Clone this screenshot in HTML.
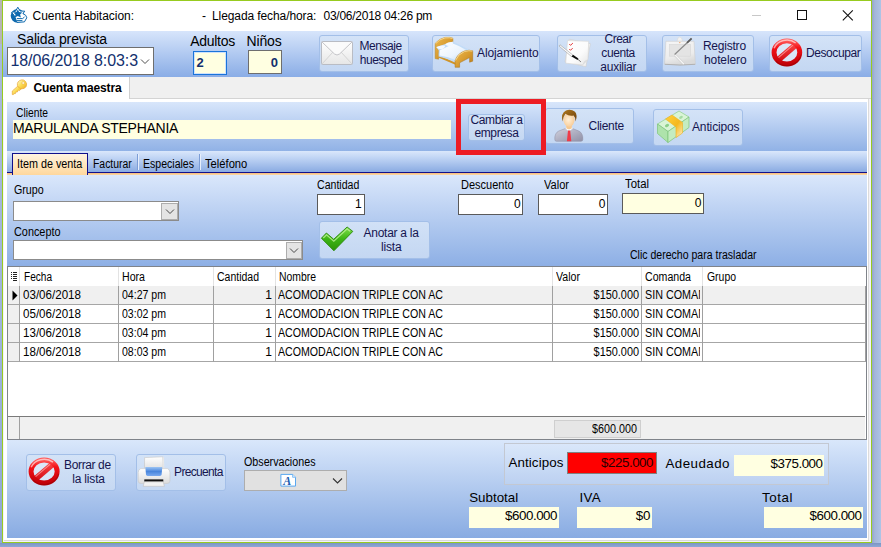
<!DOCTYPE html>
<html lang="es"><head><meta charset="utf-8"><title>Cuenta Habitacion</title><style>
html,body{margin:0;padding:0}
body{width:881px;height:547px;overflow:hidden;position:relative;background:#9db3dc;font-family:"Liberation Sans",sans-serif}
body div,body svg,.t{position:absolute}
.t{white-space:pre;display:block}
.btn{background:linear-gradient(rgba(212,227,247,0.92),rgba(200,218,243,0.92));border:1px solid #a3bfe8;border-radius:3px;box-sizing:border-box}
</style></head>
<body>
<svg width="0" height="0" style="left:0;top:0"><defs>
<linearGradient id="gRed" x1="0" y1="0" x2="0" y2="1"><stop offset="0" stop-color="#ff5a5a"/><stop offset="0.3" stop-color="#f41218"/><stop offset="1" stop-color="#c20008"/></linearGradient>
<linearGradient id="gRedHi" x1="0" y1="0" x2="0" y2="1"><stop offset="0" stop-color="#ffffff" stop-opacity="0.75"/><stop offset="1" stop-color="#ffffff" stop-opacity="0"/></linearGradient>
<linearGradient id="gWood" x1="0" y1="0" x2="1" y2="1"><stop offset="0" stop-color="#ecb850"/><stop offset="0.5" stop-color="#d89c30"/><stop offset="1" stop-color="#b87a18"/></linearGradient>
<linearGradient id="gSheet" x1="0" y1="0" x2="1" y2="1"><stop offset="0" stop-color="#ffffff"/><stop offset="0.6" stop-color="#eaf3fd"/><stop offset="1" stop-color="#b9d6f4"/></linearGradient>
<linearGradient id="gGreen" x1="0" y1="0" x2="0" y2="1"><stop offset="0" stop-color="#7fe04a"/><stop offset="0.5" stop-color="#3db515"/><stop offset="1" stop-color="#2b9208"/></linearGradient>
<linearGradient id="gGold" x1="0" y1="0" x2="1" y2="1"><stop offset="0" stop-color="#ffd23c"/><stop offset="0.55" stop-color="#f5b81e"/><stop offset="1" stop-color="#fff0c8"/></linearGradient>
<linearGradient id="gSuit" x1="0" y1="0" x2="1" y2="1"><stop offset="0" stop-color="#d2d2de"/><stop offset="0.5" stop-color="#b0b0c2"/><stop offset="1" stop-color="#9090a6"/></linearGradient>
<linearGradient id="gHair" x1="0" y1="0" x2="1" y2="1"><stop offset="0" stop-color="#b07a20"/><stop offset="1" stop-color="#6a3c08"/></linearGradient>
<radialGradient id="gFace" cx="0.45" cy="0.5" r="0.6"><stop offset="0" stop-color="#fff0d8"/><stop offset="1" stop-color="#f8c890"/></radialGradient>
<linearGradient id="gPrn" x1="0" y1="0" x2="0" y2="1"><stop offset="0" stop-color="#ffffff"/><stop offset="1" stop-color="#dcdcdc"/></linearGradient>
<linearGradient id="gPrnBlue" x1="0" y1="0" x2="0" y2="1"><stop offset="0" stop-color="#9cc4f4"/><stop offset="0.5" stop-color="#4a86dc"/><stop offset="1" stop-color="#7aaaf0"/></linearGradient>
<linearGradient id="gEnv" x1="0" y1="0" x2="0" y2="1"><stop offset="0" stop-color="#ffffff"/><stop offset="1" stop-color="#e6e6e6"/></linearGradient>
<linearGradient id="gTab" x1="0" y1="0" x2="0.3" y2="1"><stop offset="0" stop-color="#f6f6f6"/><stop offset="0.7" stop-color="#ececec"/><stop offset="1" stop-color="#dadada"/></linearGradient>
<linearGradient id="gKey" x1="0" y1="0" x2="1" y2="1"><stop offset="0" stop-color="#fffad8"/><stop offset="0.5" stop-color="#fbdc50"/><stop offset="1" stop-color="#f0a828"/></linearGradient>
<linearGradient id="gPaper" x1="0" y1="0" x2="1" y2="1"><stop offset="0" stop-color="#ffffff"/><stop offset="0.6" stop-color="#fbfbfb"/><stop offset="1" stop-color="#e4e4e4"/></linearGradient><linearGradient id="gRedB" gradientUnits="userSpaceOnUse" x1="0" y1="-10" x2="0" y2="10"><stop offset="0" stop-color="#ff4a4a"/><stop offset="1" stop-color="#d00810"/></linearGradient></defs></svg>
<div style="left:0px;top:0px;width:2px;height:44px;background:#b7b5b4;"></div>
<div style="left:0px;top:44px;width:2px;height:503px;background:linear-gradient(#a9b9d9,#9db3dc 60%,#8fa8d4);"></div>
<div style="left:872px;top:0px;width:9px;height:547px;background:linear-gradient(90deg,#95a5c9,#a3b6d8 30%,#aec4e6);"></div>
<div style="left:0px;top:543px;width:881px;height:4px;background:linear-gradient(#7d95c4,#8ea8d6);"></div>
<div class="win" style="left:2px;top:0px;width:870px;height:543px;background:#fff;border:1px solid #97cb1f;box-sizing:border-box;"></div>
<div style="left:3px;top:77px;width:868px;height:465px;background:#f3f2f8;"></div>
<div style="left:4px;top:99px;width:865px;height:442px;background:#fff;border-right:1px solid #dcdcdc;border-bottom:1px solid #dadada;box-sizing:border-box;"></div>
<svg style="left:10px;top:6px" width="19" height="19" viewBox="10 6 19 19"><circle cx="17.6" cy="15.8" r="6.9" fill="#0f6aae"/><path d="M17.8 7.2 L20.1 11 L24.8 11.2 L22.9 13.6 L25.7 15.3 L26.8 17.8 L24.4 21.9 L17 22.4 L15.9 19.6 L14.2 15.5 L11.6 12.4 L15.5 11.3 Z" fill="#fff" stroke="#0f6aae" stroke-width="1"/><path d="M17.8 9.4 L19.1 12.1 L22.3 12.4 L20.1 14.5 L20.9 17.5 L17.8 15.9 L14.8 17.6 L15.5 14.5 L13.4 12.5 L16.5 12.1 Z" fill="#0f6aae"/><path d="M15.2 16 L15.2 22 L11.8 19 Z" fill="#0f6aae"/><path d="M16.8 18.6 H22.6 L24.5 17 M16.8 20.6 H22.4" stroke="#0f6aae" stroke-width="1" fill="none"/></svg>
<span class="t" style="left:32.50px;top:9px;font-size:12px;line-height:14px;letter-spacing:-0.032px;">Cuenta Habitacion:</span>
<span class="t" style="left:202.00px;top:9px;font-size:12px;line-height:14px;">-</span>
<span class="t" style="left:212.00px;top:9px;font-size:12px;line-height:14px;letter-spacing:-0.094px;">Llegada fecha/hora:</span>
<span class="t" style="left:323.50px;top:9px;font-size:12px;line-height:14px;letter-spacing:-0.255px;">03/06/2018 04:26 pm</span>
<svg style="left:745px;top:5px" width="120" height="22" viewBox="745 5 120 22"><path d="M752 15.5 H761" stroke="#c8c8c8" stroke-width="1"/><rect x="797.5" y="10.5" width="9" height="9" fill="none" stroke="#111" stroke-width="1"/><path d="M842.8 10.3 L852.8 20.3 M852.8 10.3 L842.8 20.3" stroke="#111" stroke-width="1.1"/></svg>
<div style="left:3px;top:31px;width:868px;height:46px;background:linear-gradient(#d7e5fb,#8aade6);"></div>
<span class="t" style="left:17.00px;top:31px;font-size:14px;line-height:16px;letter-spacing:-0.122px;">Salida prevista</span>
<div style="left:7px;top:47px;width:147px;height:28px;background:#fff;border:1px solid #6e6e6e;box-sizing:border-box;"></div>
<span class="t" style="left:10.50px;top:52px;font-size:16px;line-height:17px;letter-spacing:-0.089px;color:#12306e;">18/06/2018 8:03:3</span>
<svg style="left:140px;top:58px" width="10" height="7" viewBox="0 0 10 7"><path d="M1 1.5 L5 5.5 L9 1.5" fill="none" stroke="#505050" stroke-width="1"/></svg>
<span class="t" style="left:190.20px;top:33px;font-size:14px;line-height:16px;letter-spacing:-0.272px;">Adultos</span>
<div style="left:193px;top:51px;width:34px;height:24px;background:#ffffe1;border:1px solid #1a74da;box-shadow:inset 0 0 0 1px #cfe2fa;box-sizing:border-box;"></div>
<span class="t" style="left:196.50px;top:55px;font-size:13px;line-height:15px;font-weight:700;color:#12306e;">2</span>
<span class="t" style="left:246.50px;top:33px;font-size:14px;line-height:16px;letter-spacing:-0.159px;">Niños</span>
<div style="left:248px;top:50px;width:34px;height:24px;background:#ffffe1;border:1px solid #6e6e6e;box-sizing:border-box;"></div>
<span class="t" style="left:270.67px;top:55px;font-size:13px;line-height:15px;font-weight:700;color:#12306e;">0</span>
<div class="btn" style="left:319px;top:35px;width:90px;height:36.5px;"></div>
<svg style="left:320px;top:40px" width="35" height="27" viewBox="320 40 35 27"><rect x="321.5" y="41.5" width="31" height="23" rx="1" fill="url(#gEnv)" stroke="#b9bcc4" stroke-width="1"/><path d="M322 64 L333 52 M352 64 L341 52" stroke="#d4d4d4" stroke-width="1" fill="none"/><path d="M322 42 L334.5 54 Q337 56 339.5 54 L352 42" fill="#fbfbfb" stroke="#c4c4c8" stroke-width="1"/></svg>
<span class="t" style="left:359.39px;top:39px;font-size:12px;line-height:14px;letter-spacing:-0.423px;color:#15154f;">Mensaje</span>
<span class="t" style="left:359.84px;top:53px;font-size:12px;line-height:14px;letter-spacing:-0.521px;color:#15154f;">huesped</span>
<div class="btn" style="left:432px;top:35px;width:108px;height:36.5px;"></div>
<svg style="left:433px;top:35px" width="43" height="35" viewBox="433 35 43 35"><path d="M435.2 58.6 L435.2 43.4 Q439 38.6 445 37.4 Q450 36.8 452.9 38.2 L452.9 45 L438.6 52 L438.6 59.2 Z" fill="url(#gWood)" stroke="#b8801c" stroke-width="0.5"/><path d="M435.6 43.6 Q439.4 39 445 37.9 Q450 37.3 452.6 38.5" fill="none" stroke="#f8dc98" stroke-width="0.9"/><path d="M438.4 55 L456 63 L456 65 L438.4 57.6 Z" fill="#d09428"/><path d="M436.3 47 L452.9 41.4 L471 50.4 L457 61.8 L438.6 56.4 L438.8 50.6 Z" fill="#c2dcf7"/><path d="M440 50.3 L453.4 43.8 Q460 46 466.5 50.3 Q460 53 456.6 60.4 Q448 56.8 439.6 55.6 Z" fill="url(#gSheet)"/><path d="M436.4 47.2 Q440 44.8 444.8 45.6 Q445.8 47.4 442 49.2 Q438.6 49.8 436.4 47.2Z" fill="#f4f9ff"/><path d="M445 44.2 Q448.6 41.6 452.8 42.2 Q454 44 450.4 45.8 Q447 46.4 445 44.2Z" fill="#f4f9ff"/><path d="M455.1 67.3 L455.1 60.4 Q457.6 53.6 464.4 51 Q469.6 49.6 472.7 50.8 L472.7 61.2 L469.6 62.2 L469.6 57.6 L459.6 62.8 L459.6 67.3 Z" fill="url(#gWood)" stroke="#a87014" stroke-width="0.5"/><path d="M455.5 60.4 Q458 54 464.4 51.5 Q469.4 50.1 472.4 51.1" fill="none" stroke="#f8dc98" stroke-width="0.9"/></svg>
<span class="t" style="left:477.00px;top:46px;font-size:12px;line-height:14px;letter-spacing:-0.100px;color:#15154f;">Alojamiento</span>
<div class="btn" style="left:557px;top:35px;width:90px;height:36.5px;"></div>
<svg style="left:557px;top:36px" width="36" height="33" viewBox="557 36 36 33"><path d="M569.2 39.2 L590.4 43.7 L585.9 66.7 L565 61.8 Z" fill="#f1f1f1" stroke="#cdcdcd" stroke-width="0.6"/><path d="M567.5 40.6 L588.7 41.3 L588 59.5 L582.5 64.9 L565.7 63.2 Z" fill="url(#gPaper)" stroke="#d2d2d2" stroke-width="0.6"/><path d="M588 59.5 Q584 60 582.5 64.9 Z" fill="#dcdcdc"/><path d="M569.3 44 l1.2 1.3 l2.4-2.2 M569.3 49 l1.2 1.3 l2.2-2.2" stroke="#e23a3a" stroke-width="1" fill="none"/><path d="M559 46 L560 44.8 L573 55.2 L571.8 56.8 Z" fill="#fbfbfb" stroke="#9c9c9c" stroke-width="0.6"/><path d="M571.6 56.4 L573 54.8 L578.4 58.6 L577.6 60 Z" fill="#0c0c0c"/><path d="M577.8 59.2 L580.9 61.9" stroke="#555" stroke-width="0.8"/></svg>
<span class="t" style="left:604.54px;top:32px;font-size:12px;line-height:14px;letter-spacing:-0.523px;color:#15154f;">Crear</span>
<span class="t" style="left:601.34px;top:46px;font-size:12px;line-height:14px;letter-spacing:-0.422px;color:#15154f;">cuenta</span>
<span class="t" style="left:600.36px;top:60px;font-size:12px;line-height:14px;letter-spacing:-0.277px;color:#15154f;">auxiliar</span>
<div class="btn" style="left:662px;top:35px;width:92px;height:36.5px;"></div>
<svg style="left:662px;top:35px" width="36" height="33" viewBox="662 35 36 33"><path d="M677 41.3 Q677.6 37 679.8 37 Q682 37 682.6 41.3Z" fill="#f2f2f2" stroke="#d4d4d4" stroke-width="0.5"/><path d="M665.9 41.3 L694 41.3 L695.4 64.2 Q680 65.6 664.5 64.2 Z" fill="url(#gTab)" stroke="#cccccc" stroke-width="0.6"/><path d="M664.8 64.3 Q680 65.8 695.2 64.3" fill="none" stroke="#adadad" stroke-width="0.9"/><rect x="669.4" y="44.4" width="21.2" height="11.8" fill="#e4e4e4" stroke="#d6d6d6" stroke-width="0.6"/><circle cx="679.8" cy="42.6" r="0.7" fill="#f4a060"/><path d="M674.8 54.8 L683.8 64" fill="none" stroke="#c9c9c9" stroke-width="2.4"/><path d="M674.8 54.8 L683.8 64" fill="none" stroke="#f6f6f6" stroke-width="1.4"/><path d="M691.4 38.7 L674.6 54.5" fill="none" stroke="#8c8c8c" stroke-width="1.2"/><path d="M691.6 38.4 L687 42.8" stroke="#5c5c5c" stroke-width="1.7"/></svg>
<span class="t" style="left:702.89px;top:39px;font-size:12px;line-height:14px;letter-spacing:-0.211px;color:#15154f;">Registro</span>
<span class="t" style="left:704.00px;top:53px;font-size:12px;line-height:14px;letter-spacing:-0.109px;color:#15154f;">hotelero</span>
<div class="btn" style="left:769px;top:35px;width:92.5px;height:36.5px;"></div>
<svg style="left:770px;top:37px" width="34" height="31" viewBox="770 37 34 31"><g transform="translate(786.9 52.4)"><ellipse cx="0" cy="0" rx="13.3" ry="12" fill="#e4ecf9" fill-opacity="0.55"/><path d="M-10.71 9.24 L10.71 -9.24" stroke="url(#gRedB)" stroke-width="6"/><path d="M-9.61317 6.18055 L7.52283 -8.60345" stroke="#ffb0b0" stroke-opacity="0.7" stroke-width="1.1"/><ellipse cx="0" cy="0" rx="12.85" ry="11.55" fill="none" stroke="url(#gRed)" stroke-width="4.9"/><path d="M-12.7798 -4.20685 A13.6 12.3 0 0 1 8.74191 -9.42235" fill="none" stroke="#ffffff" stroke-opacity="0.6" stroke-width="1.5"/><path d="M14.2797 2.29216 A14.5 13.2 0 0 1 -11.1076 8.4848" fill="none" stroke="#7a0000" stroke-opacity="0.35" stroke-width="1.2"/></g></svg>
<span class="t" style="left:806.00px;top:46px;font-size:12px;line-height:14px;letter-spacing:-0.415px;color:#15154f;">Desocupar</span>
<div style="left:3px;top:77px;width:868px;height:22px;background:#f0f0f0;border-bottom:1px solid #d4d4d4;box-sizing:border-box;"></div>
<div style="left:3px;top:77px;width:127px;height:22px;background:#fff;border-right:1px solid #d0d0d0;box-sizing:border-box;"></div>
<svg style="left:10px;top:78px" width="19" height="19" viewBox="10 78 19 19"><path d="M12.3 94.6 L12.3 91 L18.6 85.4 L21.8 88.4 L19.4 90.6 L18.2 90 L17.4 92 L16 91.8 L15.4 93.6 L13.8 93.6 L13.4 94.6 Z" fill="url(#gKey)" stroke="#e8a838" stroke-width="0.7"/><path d="M21.3 79.9 Q24 79.4 25.6 81.6 Q27.4 83.8 26.2 86.4 Q24.6 89.2 21.6 88.8 Q18.2 88.4 17.4 85.4 Q16.8 81.2 21.3 79.9Z" fill="url(#gKey)" stroke="#e8a838" stroke-width="0.7"/><circle cx="23.2" cy="83" r="1.3" fill="#fffbe6" stroke="#e8a838" stroke-width="0.5"/></svg>
<span class="t" style="left:33.50px;top:81px;font-size:12px;line-height:14px;letter-spacing:-0.146px;font-weight:700;">Cuenta maestra</span>
<div style="left:7px;top:102px;width:860px;height:49px;background:linear-gradient(#d8e6fb,#91b2e6);"></div>
<span class="t" style="left:15.50px;top:106px;font-size:12px;line-height:14px;transform:scaleX(0.8565);transform-origin:left center;">Cliente</span>
<div style="left:12.5px;top:120px;width:438.5px;height:19px;background:#ffffe1;"></div>
<span class="t" style="left:12.90px;top:120px;font-size:14px;line-height:16px;letter-spacing:-0.272px;">MARULANDA STEPHANIA</span>
<div class="btn" style="left:468px;top:114px;width:56.5px;height:26.5px;"></div>
<span class="t" style="left:470.42px;top:113px;font-size:12px;line-height:14px;letter-spacing:-0.362px;color:#15154f;">Cambiar a</span>
<span class="t" style="left:474.42px;top:126px;font-size:12px;line-height:14px;letter-spacing:-0.370px;color:#15154f;">empresa</span>
<div style="left:456px;top:99px;width:90px;height:56px;border:5px solid #ed1c24;box-sizing:border-box;z-index:5;"></div>
<div class="btn" style="left:545px;top:108px;width:88.5px;height:36px;"></div>
<svg style="left:552px;top:108px" width="34" height="36" viewBox="552 108 34 36"><path d="M554.8 139.5 Q554.5 133 558.8 131 L565.5 128.5 L572.5 128.5 L578.8 131 Q583.1 133 582.8 139.5 Q582.8 141.3 581 141.3 L556.6 141.3 Q554.8 141.3 554.8 139.5Z" fill="url(#gSuit)" stroke="#8c8ca2" stroke-width="0.5"/><path d="M565.4 128.6 L569 131.4 L572.8 128.6 L571.5 126.8 L566.6 126.8Z" fill="#fafafa"/><path d="M568 130.6 L570.2 130.6 L571.3 141.2 L566.9 141.2 Z" fill="#f03a48"/><path d="M566.3 124.5 H571.8 V128.3 Q569 130 566.3 128.3Z" fill="#f6c890"/><ellipse cx="569" cy="119.8" rx="5.6" ry="6.9" fill="url(#gFace)"/><path d="M562.6 121.5 Q560.5 113 566 110.4 Q571 108.6 575 111.8 Q577.8 115 575.6 121.6 Q575.6 117.5 573.6 115.6 Q569 116.6 565.4 113.8 Q563.2 116.5 562.6 121.5Z" fill="url(#gHair)"/></svg>
<span class="t" style="left:588.50px;top:119px;font-size:12px;line-height:14px;letter-spacing:-0.266px;color:#15154f;">Cliente</span>
<div class="btn" style="left:653px;top:109px;width:90px;height:36.5px;"></div>
<svg style="left:655px;top:109px" width="36" height="36" viewBox="655 109 36 36"><path d="M657.5 124 L679 111 L689 117 L668 131.5 Z" fill="#d9f4d6" stroke="#8ccf8a" stroke-width="0.7"/><path d="M657.5 124 L668 131.5 L668 142.5 L657.5 133.5 Z" fill="#aee3ab" stroke="#7cc47a" stroke-width="0.7"/><path d="M668 131.5 L689 117 L689 127.5 L668 142.5 Z" fill="#c4ecc1" stroke="#7cc47a" stroke-width="0.7"/><ellipse cx="667" cy="125.5" rx="2.2" ry="1.5" fill="#8ccf8a" transform="rotate(-30 667 125.5)"/><ellipse cx="681" cy="117.3" rx="2" ry="1.3" fill="#a5dba3" transform="rotate(-30 681 117.3)"/><path d="M665.5 119 L672 115 L682.5 122.5 L682.5 133 L676 137.6 L676 127 Z" fill="url(#gGold)" stroke="#f0b020" stroke-width="0.6"/></svg>
<span class="t" style="left:692.00px;top:120px;font-size:12px;line-height:14px;letter-spacing:-0.134px;color:#15154f;">Anticipos</span>
<div style="left:7px;top:151px;width:860px;height:21px;background:linear-gradient(#dae7fb,#c2d6f5 30%,#8aabe2);"></div>
<div style="left:7px;top:172px;width:860px;height:1px;background:#10108c;"></div>
<div style="left:7px;top:173px;width:860px;height:2px;background:linear-gradient(#f6bb78,#fbd9ac);"></div>
<div style="left:12px;top:153px;width:76px;height:22px;background:linear-gradient(#fff4e0,#ffe6be 50%,#ffd79c);border:1px solid #10108c;border-bottom:none;box-sizing:border-box;"></div>
<span class="t" style="left:17.30px;top:157px;font-size:12px;line-height:14px;transform:scaleX(0.8980);transform-origin:left center;">Item de venta</span>
<span class="t" style="left:93.30px;top:157px;font-size:12px;line-height:14px;transform:scaleX(0.8683);transform-origin:left center;">Facturar</span>
<div style="left:137px;top:154px;width:1px;height:16px;background:#7c9dd6;"></div>
<div style="left:138px;top:154px;width:1px;height:16px;background:#e6eefb;"></div>
<span class="t" style="left:143.30px;top:157px;font-size:12px;line-height:14px;transform:scaleX(0.8788);transform-origin:left center;">Especiales</span>
<div style="left:199px;top:154px;width:1px;height:16px;background:#7c9dd6;"></div>
<div style="left:200px;top:154px;width:1px;height:16px;background:#e6eefb;"></div>
<span class="t" style="left:205.00px;top:157px;font-size:12px;line-height:14px;transform:scaleX(0.9322);transform-origin:left center;">Teléfono</span>
<div style="left:7px;top:175px;width:860px;height:91px;background:linear-gradient(#dae7fb,#8dafe5);"></div>
<span class="t" style="left:14.00px;top:183px;font-size:12px;line-height:14px;transform:scaleX(0.8903);transform-origin:left center;">Grupo</span>
<div style="left:12.5px;top:201px;width:166.5px;height:20px;background:#fff;border:1px solid #8b8b8b;box-sizing:border-box;"></div>
<div style="left:161px;top:203px;width:16.5px;height:16.5px;background:#e4e4e4;border:1px solid #adadad;box-sizing:border-box;"></div>
<svg style="left:164.5px;top:208px" width="10" height="7" viewBox="0 0 10 7"><path d="M1 1.5 L5 5.5 L9 1.5" fill="none" stroke="#4a4a4a" stroke-width="1"/></svg>
<span class="t" style="left:14.00px;top:225px;font-size:12px;line-height:14px;transform:scaleX(0.9051);transform-origin:left center;">Concepto</span>
<div style="left:12.5px;top:240px;width:290.5px;height:20px;background:#fff;border:1px solid #8b8b8b;box-sizing:border-box;"></div>
<div style="left:285.5px;top:242px;width:16px;height:16.5px;background:#e4e4e4;border:1px solid #adadad;box-sizing:border-box;"></div>
<svg style="left:288.5px;top:247px" width="10" height="7" viewBox="0 0 10 7"><path d="M1 1.5 L5 5.5 L9 1.5" fill="none" stroke="#4a4a4a" stroke-width="1"/></svg>
<span class="t" style="left:317.20px;top:178px;font-size:12px;line-height:14px;transform:scaleX(0.8804);transform-origin:left center;">Cantidad</span>
<div style="left:317px;top:194px;width:48px;height:20.5px;background:#fff;border:1px solid #5a5a5a;box-sizing:border-box;"></div>
<span class="t" style="left:355.01px;top:197px;font-size:12px;line-height:14px;">1</span>
<span class="t" style="left:461.20px;top:178px;font-size:12px;line-height:14px;transform:scaleX(0.9168);transform-origin:left center;">Descuento</span>
<div style="left:458px;top:194px;width:65px;height:20.5px;background:#fff;border:1px solid #5a5a5a;box-sizing:border-box;"></div>
<span class="t" style="left:513.91px;top:197px;font-size:12px;line-height:14px;">0</span>
<span class="t" style="left:544.00px;top:178px;font-size:12px;line-height:14px;transform:scaleX(0.9217);transform-origin:left center;">Valor</span>
<div style="left:538px;top:194px;width:69.5px;height:20.5px;background:#fff;border:1px solid #5a5a5a;box-sizing:border-box;"></div>
<span class="t" style="left:598.81px;top:197px;font-size:12px;line-height:14px;">0</span>
<span class="t" style="left:624.80px;top:177px;font-size:12px;line-height:14px;transform:scaleX(0.9464);transform-origin:left center;">Total</span>
<div style="left:622px;top:193px;width:82px;height:21px;background:#ffffe1;border:1px solid #5a5a5a;box-sizing:border-box;"></div>
<span class="t" style="left:694.81px;top:196px;font-size:12px;line-height:14px;">0</span>
<div class="btn" style="left:319px;top:221px;width:111px;height:37.5px;"></div>
<svg style="left:319px;top:224px" width="36" height="29" viewBox="319 224 36 29"><path d="M321.4 238.2 L326.4 233 L333.7 239.3 L347.1 227 L352.8 231.4 L333.9 250.8 Z" fill="url(#gGreen)" stroke="#2a8a0c" stroke-width="0.9" stroke-linejoin="round"/><path d="M323.3 238 L326.5 234.8 L333.8 241.2 L347.2 228.9 L350.2 231.2" fill="none" stroke="#b8f090" stroke-opacity="0.85" stroke-width="1.2"/></svg>
<span class="t" style="left:363.52px;top:226px;font-size:12px;line-height:14px;letter-spacing:-0.268px;color:#15154f;">Anotar a la</span>
<span class="t" style="left:381.11px;top:240px;font-size:12px;line-height:14px;letter-spacing:-0.189px;color:#15154f;">lista</span>
<span class="t" style="left:630.20px;top:248px;font-size:12px;line-height:14px;transform:scaleX(0.8780);transform-origin:left center;">Clic derecho para trasladar</span>
<div style="left:7px;top:266px;width:860px;height:174px;background:#fff;border:1px solid #7f838a;box-sizing:border-box;"></div>
<div style="left:19px;top:267px;width:1px;height:19px;background:#e3e3e3;"></div>
<div style="left:118px;top:267px;width:1px;height:19px;background:#e3e3e3;"></div>
<div style="left:213px;top:267px;width:1px;height:19px;background:#e3e3e3;"></div>
<div style="left:275px;top:267px;width:1px;height:19px;background:#e3e3e3;"></div>
<div style="left:552px;top:267px;width:1px;height:19px;background:#e3e3e3;"></div>
<div style="left:641px;top:267px;width:1px;height:19px;background:#e3e3e3;"></div>
<div style="left:702px;top:267px;width:1px;height:19px;background:#e3e3e3;"></div>
<div style="left:8px;top:286px;width:857px;height:18px;background:#f0f0f0;"></div>
<div style="left:8px;top:286px;width:11px;height:75px;background:#f0f0f0;"></div>
<div style="left:8px;top:304px;width:858px;height:1px;background:#a6a6a6;"></div>
<div style="left:8px;top:323px;width:858px;height:1px;background:#a6a6a6;"></div>
<div style="left:8px;top:342px;width:858px;height:1px;background:#a6a6a6;"></div>
<div style="left:8px;top:361px;width:858px;height:1px;background:#a6a6a6;"></div>
<div style="left:19px;top:286px;width:1px;height:76px;background:#a0a0a0;"></div>
<div style="left:118px;top:286px;width:1px;height:76px;background:#a0a0a0;"></div>
<div style="left:213px;top:286px;width:1px;height:76px;background:#a0a0a0;"></div>
<div style="left:275px;top:286px;width:1px;height:76px;background:#a0a0a0;"></div>
<div style="left:552px;top:286px;width:1px;height:76px;background:#a0a0a0;"></div>
<div style="left:641px;top:286px;width:1px;height:76px;background:#a0a0a0;"></div>
<div style="left:702px;top:286px;width:1px;height:76px;background:#a0a0a0;"></div>
<div style="left:865px;top:286px;width:1px;height:76px;background:#a0a0a0;"></div>
<svg style="left:10px;top:271px" width="9" height="11" viewBox="0 0 9 11"><g fill="#222"><rect x="1" y="1" width="1" height="1"/><rect x="1" y="3" width="1" height="1"/><rect x="1" y="5" width="1" height="1"/><rect x="1" y="7" width="1" height="1"/><rect x="3" y="1" width="4" height="1"/><rect x="3" y="3" width="4" height="1"/><rect x="3" y="5" width="4" height="1"/><rect x="3" y="7" width="4" height="1"/><rect x="3" y="9" width="4" height="1"/></g></svg>
<svg style="left:12px;top:290px" width="6" height="11" viewBox="0 0 6 11"><path d="M0.5 0.5 L5.5 5.5 L0.5 10.5 Z" fill="#000"/></svg>
<span class="t" style="left:23.50px;top:270px;font-size:12px;line-height:14px;transform:scaleX(0.8393);transform-origin:left center;">Fecha</span>
<span class="t" style="left:122.00px;top:270px;font-size:12px;line-height:14px;transform:scaleX(0.8841);transform-origin:left center;">Hora</span>
<span class="t" style="left:217.00px;top:270px;font-size:12px;line-height:14px;transform:scaleX(0.8741);transform-origin:left center;">Cantidad</span>
<span class="t" style="left:279.00px;top:270px;font-size:12px;line-height:14px;transform:scaleX(0.8668);transform-origin:left center;">Nombre</span>
<span class="t" style="left:555.50px;top:270px;font-size:12px;line-height:14px;transform:scaleX(0.8848);transform-origin:left center;">Valor</span>
<span class="t" style="left:645.00px;top:270px;font-size:12px;line-height:14px;transform:scaleX(0.8841);transform-origin:left center;">Comanda</span>
<span class="t" style="left:706.50px;top:270px;font-size:12px;line-height:14px;transform:scaleX(0.8693);transform-origin:left center;">Grupo</span>
<span class="t" style="left:22.50px;top:288px;font-size:12px;line-height:14px;transform:scaleX(0.9657);transform-origin:left center;">03/06/2018</span>
<span class="t" style="left:121.50px;top:288px;font-size:12px;line-height:14px;transform:scaleX(0.8792);transform-origin:left center;">04:27 pm</span>
<span class="t" style="left:265.31px;top:288px;font-size:12px;line-height:14px;">1</span>
<span class="t" style="left:277.50px;top:288px;font-size:12px;line-height:14px;transform:scaleX(0.8848);transform-origin:left center;">ACOMODACION TRIPLE CON AC</span>
<span class="t" style="left:588.94px;top:288px;font-size:12px;line-height:14px;transform:scaleX(0.9089);transform-origin:right center;">$150.000</span>
<div style="left:642px;top:286px;width:57.5px;height:17px;overflow:hidden"><span class="t" style="left:2.70px;top:2px;font-size:12px;line-height:14px;transform:scaleX(0.8974);transform-origin:left center;">SIN COMANDA</span></div>
<span class="t" style="left:22.50px;top:307px;font-size:12px;line-height:14px;transform:scaleX(0.9657);transform-origin:left center;">05/06/2018</span>
<span class="t" style="left:121.50px;top:307px;font-size:12px;line-height:14px;transform:scaleX(0.8792);transform-origin:left center;">03:02 pm</span>
<span class="t" style="left:265.31px;top:307px;font-size:12px;line-height:14px;">1</span>
<span class="t" style="left:277.50px;top:307px;font-size:12px;line-height:14px;transform:scaleX(0.8848);transform-origin:left center;">ACOMODACION TRIPLE CON AC</span>
<span class="t" style="left:588.94px;top:307px;font-size:12px;line-height:14px;transform:scaleX(0.9089);transform-origin:right center;">$150.000</span>
<div style="left:642px;top:305px;width:57.5px;height:17px;overflow:hidden"><span class="t" style="left:2.70px;top:2px;font-size:12px;line-height:14px;transform:scaleX(0.8974);transform-origin:left center;">SIN COMANDA</span></div>
<span class="t" style="left:22.50px;top:326px;font-size:12px;line-height:14px;transform:scaleX(0.9657);transform-origin:left center;">13/06/2018</span>
<span class="t" style="left:121.50px;top:326px;font-size:12px;line-height:14px;transform:scaleX(0.8792);transform-origin:left center;">03:04 pm</span>
<span class="t" style="left:265.31px;top:326px;font-size:12px;line-height:14px;">1</span>
<span class="t" style="left:277.50px;top:326px;font-size:12px;line-height:14px;transform:scaleX(0.8848);transform-origin:left center;">ACOMODACION TRIPLE CON AC</span>
<span class="t" style="left:588.94px;top:326px;font-size:12px;line-height:14px;transform:scaleX(0.9089);transform-origin:right center;">$150.000</span>
<div style="left:642px;top:324px;width:57.5px;height:17px;overflow:hidden"><span class="t" style="left:2.70px;top:2px;font-size:12px;line-height:14px;transform:scaleX(0.8974);transform-origin:left center;">SIN COMANDA</span></div>
<span class="t" style="left:22.50px;top:345px;font-size:12px;line-height:14px;transform:scaleX(0.9657);transform-origin:left center;">18/06/2018</span>
<span class="t" style="left:121.50px;top:345px;font-size:12px;line-height:14px;transform:scaleX(0.8792);transform-origin:left center;">08:03 pm</span>
<span class="t" style="left:265.31px;top:345px;font-size:12px;line-height:14px;">1</span>
<span class="t" style="left:277.50px;top:345px;font-size:12px;line-height:14px;transform:scaleX(0.8848);transform-origin:left center;">ACOMODACION TRIPLE CON AC</span>
<span class="t" style="left:588.94px;top:345px;font-size:12px;line-height:14px;transform:scaleX(0.9089);transform-origin:right center;">$150.000</span>
<div style="left:642px;top:343px;width:57.5px;height:17px;overflow:hidden"><span class="t" style="left:2.70px;top:2px;font-size:12px;line-height:14px;transform:scaleX(0.8974);transform-origin:left center;">SIN COMANDA</span></div>
<div style="left:8px;top:416px;width:857px;height:1px;background:#7a7a7a;"></div>
<div style="left:8px;top:417px;width:857px;height:22px;background:#f0f0f0;"></div>
<div style="left:19px;top:417px;width:1px;height:22px;background:#a0a0a0;"></div>
<div style="left:553.5px;top:419.5px;width:87.5px;height:18px;background:#e6e6e6;border:1px solid #cfcfcf;box-sizing:border-box;"></div>
<span class="t" style="left:587.44px;top:422px;font-size:12px;line-height:14px;transform:scaleX(0.8989);transform-origin:right center;">$600.000</span>
<div style="left:7px;top:440px;width:860px;height:98px;background:linear-gradient(#d9e7fb,#88abe2);"></div>
<div class="btn" style="left:26px;top:454px;width:90px;height:36.5px;"></div>
<svg style="left:27px;top:456px" width="34" height="31" viewBox="27 456 34 31"><g transform="translate(44.1 471.5)"><ellipse cx="0" cy="0" rx="13.5" ry="11.9" fill="#e4ecf9" fill-opacity="0.55"/><path d="M-10.85 9.174 L10.85 -9.174" stroke="url(#gRedB)" stroke-width="6"/><path d="M-9.71306 6.11741 L7.64694 -8.56099" stroke="#ffb0b0" stroke-opacity="0.7" stroke-width="1.1"/><ellipse cx="0" cy="0" rx="13.05" ry="11.45" fill="none" stroke="url(#gRed)" stroke-width="4.9"/><path d="M-12.9678 -4.17265 A13.8 12.2 0 0 1 8.87047 -9.34574" fill="none" stroke="#ffffff" stroke-opacity="0.6" stroke-width="1.5"/><path d="M14.4767 2.27479 A14.7 13.1 0 0 1 -11.2609 8.42052" fill="none" stroke="#7a0000" stroke-opacity="0.35" stroke-width="1.2"/></g></svg>
<span class="t" style="left:64.11px;top:458px;font-size:12px;line-height:14px;letter-spacing:-0.381px;color:#15154f;">Borrar de</span>
<span class="t" style="left:72.17px;top:472px;font-size:12px;line-height:14px;letter-spacing:-0.164px;color:#15154f;">la lista</span>
<div class="btn" style="left:135.5px;top:454px;width:90px;height:36.5px;"></div>
<svg style="left:136px;top:455px" width="36" height="33" viewBox="136 455 36 33"><path d="M144.6 457.6 L162.8 456.8 L163.4 471 L144.4 471 Z" fill="url(#gPrn)" stroke="#c4c4c4" stroke-width="0.6"/><path d="M162.8 456.8 L163.9 457.6 L164.4 470 L163.4 471Z" fill="#e8e8e8"/><path d="M140.8 468.6 L167.4 468.6 Q169.9 469.5 169.9 472.5 L169.9 481 Q169.9 483.4 167.4 483.4 L140.8 483.4 Q138.2 483.4 138.2 481 L138.2 472.5 Q138.2 469.5 140.8 468.6Z" fill="url(#gPrn)" stroke="#c8c8c8" stroke-width="0.6"/><path d="M145.3 467 L162.3 467 L161.6 474.6 Q161.4 476 160 476 L147.6 476 Q146.2 476 146 474.6 Z" fill="url(#gPrnBlue)"/><rect x="144.3" y="479.4" width="19" height="2.4" fill="#111"/><path d="M144.3 481.8 L163.3 481.8 L164.4 486.3 L143.2 486.3 Z" fill="#f2f2f2" stroke="#c0c0c0" stroke-width="0.6"/></svg>
<span class="t" style="left:174.10px;top:465px;font-size:12px;line-height:14px;letter-spacing:-0.678px;color:#15154f;">Precuenta</span>
<span class="t" style="left:244.00px;top:455px;font-size:12px;line-height:14px;transform:scaleX(0.8932);transform-origin:left center;">Observaciones</span>
<div style="left:243.5px;top:470px;width:103.5px;height:20.5px;background:#e1e1e1;border:1px solid #adadad;box-sizing:border-box;"></div>
<svg style="left:279px;top:472px" width="19" height="16" viewBox="279 472 19 16"><path d="M280.9 474.4 L292.6 474.4 L295.5 477.3 L295.5 486.1 L280.9 486.1 Z" fill="#fff" stroke="#5aa8f0" stroke-width="1"/><path d="M292.6 474.4 L292.6 477.3 L295.5 477.3" fill="#d8ecff" stroke="#5aa8f0" stroke-width="0.7"/><text x="283.2" y="484.6" font-family="Liberation Serif,serif" font-style="italic" font-weight="700" font-size="12" fill="#1c5cb0">A</text></svg>
<svg style="left:332px;top:477px" width="11" height="8" viewBox="0 0 11 8"><path d="M1 1.5 L5.5 6 L10 1.5" fill="none" stroke="#333" stroke-width="1.1"/></svg>
<div style="left:504px;top:443px;width:325px;height:41.5px;background:rgba(255,255,255,0.10);border:1px solid #c3c8d2;box-sizing:border-box;"></div>
<span class="t" style="left:508.50px;top:455px;font-size:13.33px;line-height:15px;letter-spacing:0.101px;">Anticipos</span>
<div style="left:566.5px;top:452px;width:90.5px;height:22px;background:#ff0000;border:1px solid #808080;box-sizing:border-box;"></div>
<span class="t" style="left:601.05px;top:455px;font-size:13.33px;line-height:15px;letter-spacing:-0.449px;color:#2a0000;">$225.000</span>
<span class="t" style="left:665.50px;top:456px;font-size:13.33px;line-height:15px;letter-spacing:0.465px;">Adeudado</span>
<div style="left:733.5px;top:455px;width:90.5px;height:20.5px;background:#ffffe1;"></div>
<span class="t" style="left:770.55px;top:456px;font-size:13.33px;line-height:15px;letter-spacing:-0.449px;">$375.000</span>
<span class="t" style="left:469.20px;top:490px;font-size:13.33px;line-height:15px;letter-spacing:0.010px;">Subtotal</span>
<div style="left:468.5px;top:506.5px;width:90px;height:21px;background:#ffffe1;"></div>
<span class="t" style="left:505.05px;top:508px;font-size:13.33px;line-height:15px;letter-spacing:-0.449px;">$600.000</span>
<span class="t" style="left:579.50px;top:490px;font-size:13.33px;line-height:15px;letter-spacing:0.333px;">IVA</span>
<div style="left:576.5px;top:506.5px;width:75.5px;height:21px;background:#ffffe1;"></div>
<span class="t" style="left:635.67px;top:508px;font-size:13.33px;line-height:15px;">$0</span>
<span class="t" style="left:762.00px;top:490px;font-size:13.33px;line-height:15px;letter-spacing:0.569px;">Total</span>
<div style="left:764px;top:507px;width:99px;height:20.5px;background:#ffffe1;"></div>
<span class="t" style="left:809.55px;top:508px;font-size:13.33px;line-height:15px;letter-spacing:-0.449px;">$600.000</span>
</body></html>
